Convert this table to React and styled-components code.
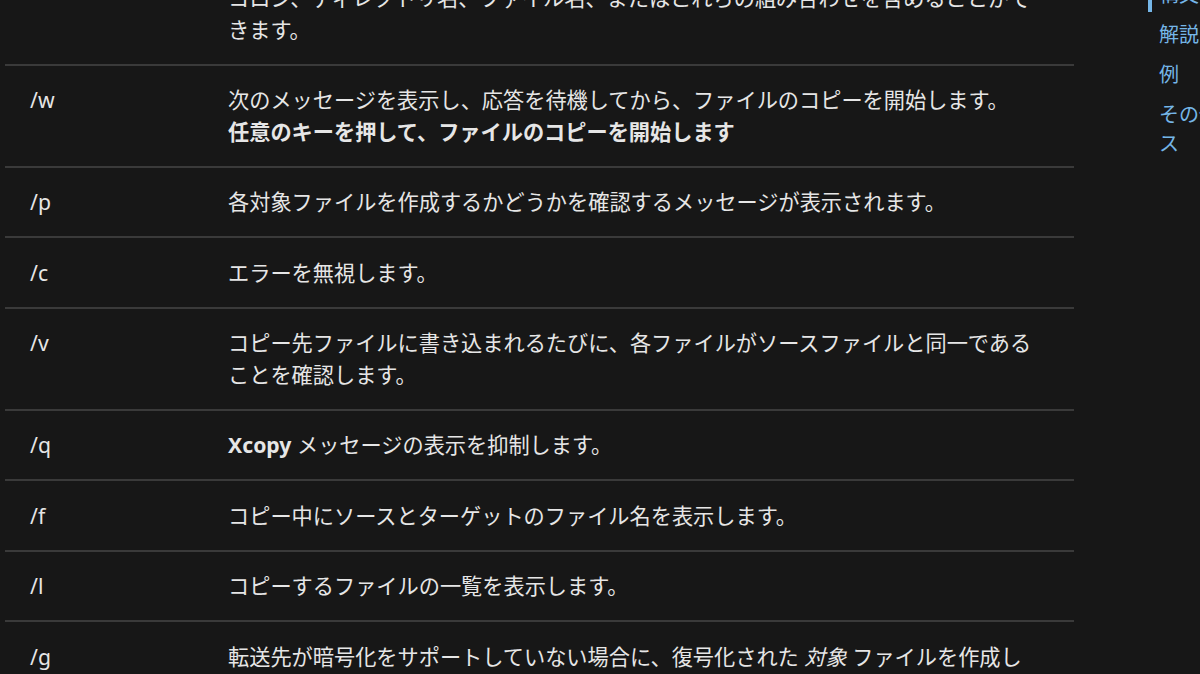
import styled, { createGlobalStyle } from "styled-components";

const GlobalStyle = createGlobalStyle`
  html, body {
    margin: 0;
    padding: 0;
    background: #171717;
    overflow: hidden;
  }
  body {
    font-family: "Noto Sans", "Noto Sans CJK JP", sans-serif;
    color: #e6e6e6;
  }
`;

const rows = [
  {
    name: "<Destination>",
    desc: (
      <>
        ファイルのコピー先（必須）を指定します。このパラメーターには、ドライブ文字とコロン、ディレクトリ名、ファイル名、またはこれらの組み合わせを含めることができます。
      </>
    ),
  },
  {
    name: "/w",
    desc: (
      <>
        次のメッセージを表示し、応答を待機してから、ファイルのコピーを開始します。
        <br />
        <strong>任意のキーを押して、ファイルのコピーを開始します</strong>
      </>
    ),
  },
  { name: "/p", desc: "各対象ファイルを作成するかどうかを確認するメッセージが表示されます。" },
  { name: "/c", desc: "エラーを無視します。" },
  {
    name: "/v",
    desc: "コピー先ファイルに書き込まれるたびに、各ファイルがソースファイルと同一であることを確認します。",
  },
  {
    name: "/q",
    desc: (
      <>
        <strong>Xcopy</strong> メッセージの表示を抑制します。
      </>
    ),
  },
  { name: "/f", desc: "コピー中にソースとターゲットのファイル名を表示します。" },
  { name: "/l", desc: "コピーするファイルの一覧を表示します。" },
  {
    name: "/g",
    desc: (
      <>
        転送先が暗号化をサポートしていない場合に、復号化された <em>対象</em> ファイルを作成します。
      </>
    ),
  },
  { name: "/d", desc: "指定した日付以降に変更されたソース ファイルのみをコピーします。" },
];

const toc = [
  { label: "構文", active: true },
  { label: "解説" },
  { label: "例" },
  { label: "その他のリソース" },
];

export default function App() {
  return (
    <>
      <GlobalStyle />
      <Page>
        <Main>
          <ParamTable>
            <tbody>
              {rows.map((row) => (
                <Row key={row.name}>
                  <NameCell>{row.name}</NameCell>
                  <DescCell>{row.desc}</DescCell>
                </Row>
              ))}
            </tbody>
          </ParamTable>
        </Main>
        <Aside>
          <TocList>
            {toc.map((item) => (
              <TocItem key={item.label} $active={item.active}>
                {item.label}
              </TocItem>
            ))}
          </TocList>
        </Aside>
      </Page>
    </>
  );
}

const Page = styled.div`
  display: flex;
  align-items: flex-start;
  width: 1340px;
  margin-top: -68px;
`;

const Main = styled.main`
  margin-left: 5px;
  width: 1069px;
  flex-shrink: 0;
`;

const ParamTable = styled.table`
  width: 100%;
  border-collapse: collapse;
  table-layout: fixed;
  font-size: 21.2px;
  line-height: 31.5px;
`;

const Row = styled.tr`
  border-top: 2px solid #3a3a3a;
  &:first-child {
    border-top: none;
  }
`;

const NameCell = styled.td`
  width: 198px;
  box-sizing: border-box;
  padding: 18.5px 20px 18.5px 25px;
  vertical-align: top;
  white-space: nowrap;
  overflow: hidden;
`;

const DescCell = styled.td`
  padding: 18.5px 33px 18.5px 25px;
  vertical-align: top;

  strong {
    font-weight: 700;
  }
  em {
    font-style: italic;
  }
`;

const Aside = styled.aside`
  margin-left: 74px;
  width: 160px;
  flex-shrink: 0;
  padding-top: 44.5px;
`;

const TocList = styled.ul`
  list-style: none;
  margin: 0;
  padding: 0;
  display: flex;
  flex-direction: column;
  gap: 5px;
`;

const TocItem = styled.li`
  width: 150px;
  padding: 3px 0 3px 7px;
  border-left: 4px solid ${(p) => (p.$active ? "#75b6e7" : "transparent")};
  color: #75b6e7;
  font-size: 20px;
  line-height: 29px;
`;
